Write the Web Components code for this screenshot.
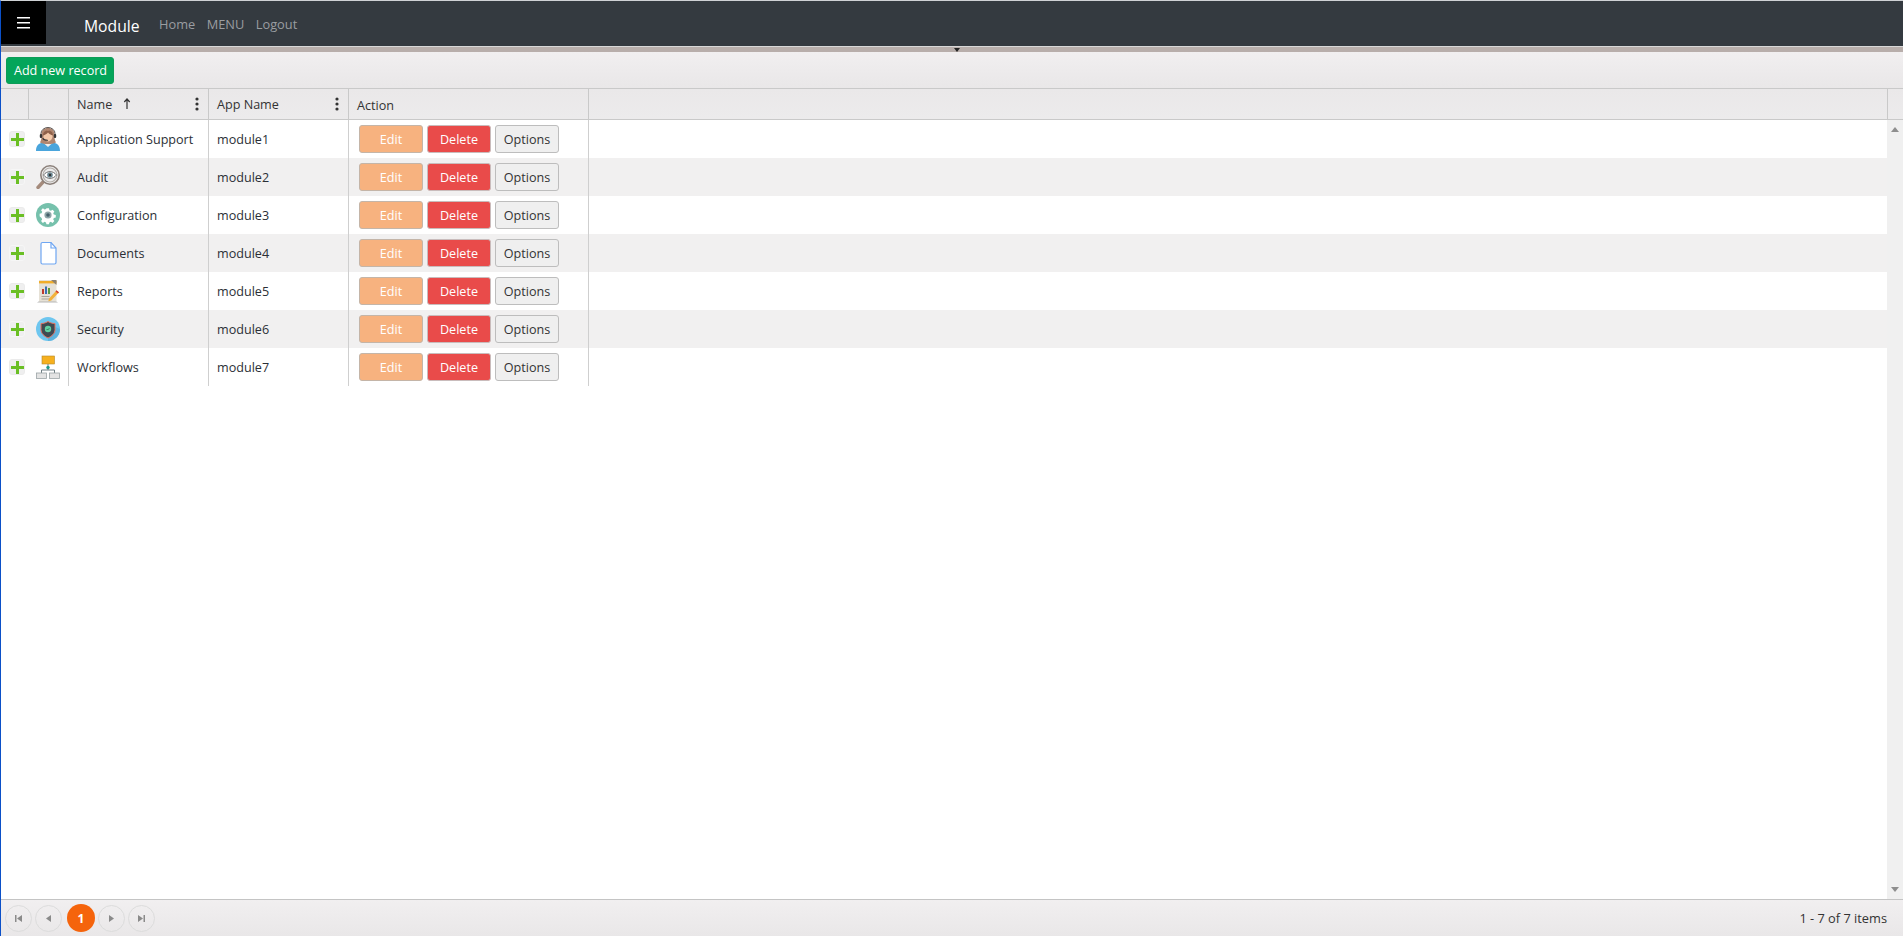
<!DOCTYPE html>
<html lang="en"><head><meta charset="utf-8"><title>Module</title>
<style>
html,body{margin:0;height:100%;overflow:hidden}
body{font:12.6px "Open Sans","Noto Sans",sans-serif;color:#2b2f36;background:#fff}
app-shell{height:100vh}
</style></head><body>
<app-shell>
  <app-navbar brand="Module"><nav-link>Home</nav-link><nav-link>MENU</nav-link><nav-link>Logout</nav-link></app-navbar>
  <app-splitter></app-splitter>
  <app-toolbar><action-button kind="add">Add new record</action-button></app-toolbar>
  <grid-header></grid-header>
  <grid-body>
    <grid-row name="Application Support" app="module1" icon="support"></grid-row>
    <grid-row alt name="Audit" app="module2" icon="audit"></grid-row>
    <grid-row name="Configuration" app="module3" icon="config"></grid-row>
    <grid-row alt name="Documents" app="module4" icon="doc"></grid-row>
    <grid-row name="Reports" app="module5" icon="report"></grid-row>
    <grid-row alt name="Security" app="module6" icon="security"></grid-row>
    <grid-row name="Workflows" app="module7" icon="flow"></grid-row>
  </grid-body>
  <grid-pager></grid-pager>
</app-shell>
<script>
const COLS='28px 40px 140px 140px 240px';
const ICONS={
support:`<path d="M0 24c0-5 2-7.500 7-8.500l5 2.500 5-2.500c5 1 7 3.500 7 8.500z" fill="#4aa5dc"/><path d="M8.500 14.500h7l1 1.500-4.500 4-4.500-4z" fill="#f2efec"/><path d="M4 15.500c1.500-2.500 1.500-5 1.500-8C5.500 3 8.500 1 12 1s6.500 2 6.500 6.500c0 3 0 5.500 1.500 8-2.500 1.500-4.500 1.500-8 1.500s-5.500 0-8-1.500z" fill="#b08670"/><ellipse cx="12" cy="9" rx="4.600" ry="5.400" fill="#f3c9aa"/><path d="M7 8.500C7 5 9 3.500 12 3.500S17 5 17 8.500c-2.200-.6-4-1.800-5-3-1 1.200-2.800 2.400-5 3z" fill="#8f614a"/><path d="M5 8V6.500a7 6 0 0 1 14 0V8" fill="none" stroke="#5a5350" stroke-width="1"/><rect x="3.800" y="7" width="2.400" height="4" rx="1.100" fill="#333"/><rect x="17.800" y="7" width="2.400" height="4" rx="1.100" fill="#333"/><path d="M7 11.500c.5 1.300 2 1.800 4.500 1.800" fill="none" stroke="#333" stroke-width="1.100" stroke-linecap="round"/>`,
audit:`<path d="M7.500 16.500 2 22.500" stroke="#a58b7c" stroke-width="3.400" stroke-linecap="round"/><circle cx="14" cy="10" r="9.200" fill="#ececec" stroke="#8b807a" stroke-width="1.600"/><circle cx="14" cy="10" r="7" fill="none" stroke="#b4aea9" stroke-width="1.100"/><path d="M7.500 10c3.500-4.500 9.500-4.500 13 0-3.500 4.500-9.500 4.500-13 0z" fill="#fff" stroke="#6d6d6d"/><circle cx="14" cy="10" r="2.800" fill="#6b8792"/><circle cx="14" cy="10" r="1.200" fill="#333"/>`,
config:`<circle cx="12" cy="12" r="12" fill="#76c1ac"/><path fill="#fff" d="M10.500 4h3l.5 2.300 1.700.7 2-1.300 2.100 2.100-1.300 2 .7 1.700 2.300.5v3l-2.300.5-.7 1.700 1.300 2-2.100 2.100-2-1.300-1.700.7-.5 2.300h-3l-.5-2.300-1.700-.7-2 1.300-2.100-2.100 1.300-2-.7-1.700L2.500 13.500v-3l2.300-.5.7-1.700-1.300-2 2.100-2.100 2 1.300 1.700-.7z" transform="translate(1.500 1.800) scale(.85)"/><circle cx="12" cy="12" r="3.600" fill="#8fa5a8"/><circle cx="12" cy="12" r="1.800" fill="#46606a"/>`,
doc:`<path d="M6.500 1.500h8.500l5 5.500v14.500a1.500 1.500 0 0 1-1.500 1.500H6.500A1.500 1.500 0 0 1 5 21.500V3a1.500 1.500 0 0 1 1.500-1.500z" fill="#fff" stroke="#6ea6f2" stroke-width="1.200"/><path d="M15 1.500V7h5" fill="none" stroke="#6ea6f2" stroke-width="1.200"/>`,
report:`<path d="M1 23.500h21l-2.500-1.500H3.500z" fill="#b5b5b5"/><rect x="3" y="1" width="17.500" height="21.500" fill="#e6e1d6"/><rect x="3" y="2" width="17.500" height="2.400" fill="#f0ad2a"/><path d="M15 1h5.500v5z" fill="#8f8270"/><rect x="6" y="10" width="2" height="5" fill="#c0392b"/><rect x="9" y="7.500" width="2" height="7.500" fill="#3b6fb5"/><rect x="12" y="9" width="2" height="6" fill="#5a9a3c"/><path d="M5.500 17.500h8M5.500 20h8" stroke="#a9a499"/><path d="M13 19.500l7.500-8 2.300 2-7.500 8-3 .8z" fill="#f2b13b"/><path d="M19.500 12.500l1-1.200 2.500 2-1 1.200z" fill="#d6402f"/>`,
security:`<circle cx="12" cy="12" r="12" fill="#6ec6ef"/><path d="M12 21 19.500 10 24 12a12 12 0 0 1-12 12z" fill="#5fb4de"/><path d="M12 4.500c2.500 1.500 4.500 2 7 2v6c0 4-3 6.500-7 8.500-4-2-7-4.500-7-8.500v-6c2.500 0 4.500-.5 7-2z" fill="#3e4a52" stroke="#e9705f" stroke-width="1"/><circle cx="12" cy="12" r="3.200" fill="#5fd0a0"/><path d="M10.600 12l1 1 1.800-1.800" stroke="#2c6d55" fill="none" stroke-width=".9"/>`,
flow:`<rect x="6" y="1" width="12.500" height="8" fill="#f6b01e" stroke="#b5892a" stroke-width=".6"/><path d="M12 9v6M5.500 18v-3h13v3" fill="none" stroke="#6f7e83"/><circle cx="12" cy="12.500" r="1.700" fill="#1f9a8a"/><rect x=".5" y="18" width="10" height="5.500" fill="#e3e3e3" stroke="#9ba3a6" stroke-width=".8"/><rect x="13.500" y="18" width="10" height="5.500" fill="#e3e3e3" stroke="#9ba3a6" stroke-width=".8"/>`
};
function def(name,html,init){customElements.define(name,class extends HTMLElement{
  connectedCallback(){ if(this.shadowRoot) return; const r=this.attachShadow({mode:'open'}); r.innerHTML=typeof html==='function'?html(this):html; init&&init(r,this);} });}

def('app-shell',`<style>:host{display:flex;flex-direction:column;border-left:1px solid #0b50c8;border-top:1px solid #cfd2d5;box-sizing:border-box;overflow:hidden}</style><slot></slot>`);

def('nav-link',`<style>:host{display:block;color:#9a9da1;font-size:12.800px;line-height:18px}</style><slot></slot>`);

def('app-navbar',el=>`<style>
:host{display:flex;height:45px;background:#343a40;align-items:flex-start;flex:none}
.burger{width:45px;height:43px;background:#000;display:flex;align-items:center;justify-content:center;flex:none;box-sizing:border-box;padding-top:2px}
.brand{color:#fff;font-size:15.700px;margin-left:38px;line-height:24px;margin-top:13px;width:55px;white-space:nowrap}
.links{display:flex;gap:11.500px;margin-left:20px;margin-top:14px}
</style><div class="burger"><svg width="13" height="13" viewBox="0 0 13 13"><rect width="13" height="1.500" y="0" fill="#fff"/><rect width="13" height="1.500" y="5" fill="#fff"/><rect width="13" height="1.500" y="10" fill="#fff"/></svg></div>
<div class="brand">${el.getAttribute('brand')}</div><div class="links"><slot></slot></div>`);

def('app-splitter',`<style>:host{display:flex;justify-content:center;height:6px;flex:none;background:#b8aeab;border-top:1px solid #d8d8d8;box-sizing:border-box}
svg{margin-top:1px;margin-left:10px}</style><svg width="6" height="4" viewBox="0 0 6 4"><path d="M0 0h6L3 4z" fill="#222"/></svg>`);

def('app-toolbar',`<style>:host{display:flex;align-items:center;height:37px;flex:none;padding:0 0 0 5px;background:linear-gradient(#f1eff0,#e9e7e8);border-bottom:1px solid #c9c9c9;box-sizing:border-box}</style><slot></slot>`);

def('action-button',el=>`<style>
:host{display:flex;align-items:center;justify-content:center;box-sizing:border-box;border-radius:3px;font-size:12.600px;white-space:nowrap;border:1px solid #bdbdbd}
:host([kind=add]){width:108px;height:27px;background:#04a55a;border-color:#0d9c58;color:#fff;padding-left:1px}
:host([kind=edit]){width:64px;height:28px;background:#f7b27f;color:#fff;border-color:#c4b5a8}
:host([kind=delete]){width:64px;height:28px;background:#e94b4a;color:#fff;border-color:#c9bcbc}
:host([kind=options]){width:64px;height:28px;background:#efefef;color:#333}
</style><slot></slot>`);

def('grid-header',`<style>
:host{display:grid;grid-template-columns:${COLS} 1299px 1fr;height:31px;flex:none;background:linear-gradient(#eae8e9,#ecebec);border-bottom:1px solid #c9c9c9;box-sizing:border-box;font-size:12.600px;color:#333}
.c{border-right:1px solid #c9c9c9;display:flex;align-items:center;padding:0 8px;box-sizing:border-box;min-width:0}
.c:last-child{border:0}
.t{white-space:nowrap}
.arrow{margin-left:11px;margin-top:-2px}
.k{margin-left:auto;margin-top:-1px;margin-right:1px}
.a{margin-top:3px}
</style>
<div class="c"></div><div class="c"></div>
<div class="c"><span class="t">Name</span><svg class="arrow" width="8" height="11" viewBox="0 0 8 11"><path d="M4 11V1M1.300 4 4 1l2.700 3" fill="none" stroke="#333" stroke-width="1.200"/></svg><svg class="k" width="4" height="14" viewBox="0 0 4 14"><circle cx="2" cy="2" r="1.600" fill="#333"/><circle cx="2" cy="7" r="1.600" fill="#333"/><circle cx="2" cy="12" r="1.600" fill="#333"/></svg></div>
<div class="c"><span class="t">App Name</span><svg class="k" width="4" height="14" viewBox="0 0 4 14"><circle cx="2" cy="2" r="1.600" fill="#333"/><circle cx="2" cy="7" r="1.600" fill="#333"/><circle cx="2" cy="12" r="1.600" fill="#333"/></svg></div>
<div class="c"><span class="a">Action</span></div><div class="c"></div><div class="c"></div>`);

def('grid-body',`<style>
:host{display:flex;flex:1;min-height:0}
.rows{flex:1;min-width:0}
.sb{width:16px;flex:none;background:#f0f0f0;display:flex;flex-direction:column;justify-content:space-between;align-items:center;padding:7px 0 7px;box-sizing:border-box}
</style><div class="rows"><slot></slot></div>
<div class="sb"><svg width="8" height="5" viewBox="0 0 8 5"><path d="M0 5h8L4 0z" fill="#8e8e8e"/></svg><svg width="8" height="5" viewBox="0 0 8 5"><path d="M0 0h8L4 5z" fill="#8e8e8e"/></svg></div>`);

def('grid-row',el=>`<style>
:host{display:grid;grid-template-columns:${COLS} 1fr;height:38px;background:#fff;color:#2b2f36;font-size:12.600px}
:host([alt]){background:#f1f0f0}
.c{display:flex;align-items:center;box-sizing:border-box;border-right:1px solid #cfcfcf;padding-left:8px;white-space:nowrap;min-width:0}
.c.plain{border-right:0}
.plus{width:16px;height:16px;background:#efefef;border:1px solid #ebebeb;box-sizing:border-box;border-radius:3px;display:flex;align-items:center;justify-content:center}
:host([alt]) .plus{border-color:#f6f6f6}
.ic{padding-left:7px}
.btns{display:flex;gap:4px;padding-left:2px}
</style>
<div class="c plain"><div class="plus"><svg width="13" height="13" viewBox="0 0 13 13"><path d="M6.500 0v13M0 6.500h13" stroke="#6abf24" stroke-width="3"/></svg></div></div>
<div class="c ic"><svg width="24" height="24" viewBox="0 0 24 24">${ICONS[el.getAttribute('icon')]}</svg></div>
<div class="c">${el.getAttribute('name')}</div>
<div class="c">${el.getAttribute('app')}</div>
<div class="c"><div class="btns"><action-button kind="edit">Edit</action-button><action-button kind="delete">Delete</action-button><action-button kind="options">Options</action-button></div></div>
<div class="c plain"></div>`);

const pb=(d)=>`<div class="p"><svg width="9" height="9" viewBox="0 0 9 9"><path d="${d}" fill="#8a8a8a"/></svg></div>`;
def('grid-pager',`<style>
:host{display:flex;align-items:center;height:37px;flex:none;background:linear-gradient(#f1eff0,#e9e7e8);border-top:1px solid #c4c4c4;box-sizing:border-box;padding:0 16px 0 4px;font-size:12.800px;color:#333}
.p,.cur{width:27px;height:27px;border-radius:50%;box-sizing:border-box;display:flex;align-items:center;justify-content:center;flex:none}
.p{border:1px solid #dcdcdc;margin-right:3px}
.cur{width:28px;height:28px;background:#f5640c;color:#fff;font-weight:700;font-size:12px;margin:0 3px 0 2px}
.info{margin-left:auto}
</style>
${pb('M1 1h1.500v7H1zM8 1v7L3 4.500z')}${pb('M7 1v7L2 4.500z')}<div class="cur">1</div>${pb('M2 1v7l5-3.500z')}${pb('M8 1H6.500v7H8zM1 1v7l5-3.500z')}
<div class="info">1 - 7 of 7 items</div>`);
</script>
</body></html>
